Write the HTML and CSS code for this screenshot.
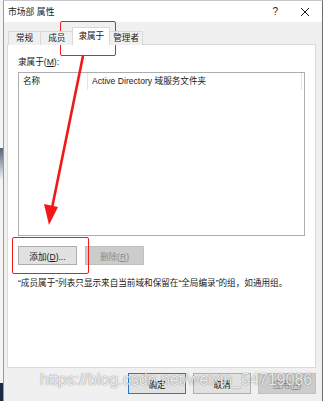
FILE: index.html
```html
<!DOCTYPE html>
<html lang="zh-CN">
<head>
  <meta charset="UTF-8" />
  <title>市场部 属性</title>
  <link rel="stylesheet" href="styles.css">
</head>
<body>
  <div class="screen">
    <div class="desk-strip"></div>

    <div class="window">
      <div class="titlebar">
        <span class="title">市场部 属性</span>
        <span class="help">?</span>
        <svg class="close" width="10" height="10" viewBox="0 0 10 10">
          <path d="M1 1 L9 9 M9 1 L1 9" stroke="#1a1a1a" stroke-width="1" fill="none"/>
        </svg>
      </div>

      <div class="dialog">
        <div class="tabs">
          <div class="tab">常规</div>
          <div class="tab">成员</div>
          <div class="tab active">隶属于</div>
          <div class="tab tab-last">管理者</div>
        </div>

        <div class="panel">
          <div class="label">隶属于(<u>M</u>):</div>

          <div class="list">
            <div class="list-head">
              <div class="col col-name">名称</div>
              <div class="col col-folder">Active Directory 域服务文件夹</div>
            </div>
          </div>

          <div class="list-actions">
            <button class="button">添加(<u>D</u>)...</button>
            <button class="button disabled">删除(<u>R</u>)</button>
          </div>

          <p class="note">“成员属于”列表只显示来自当前域和保留在“全局编录”的组，如通用组。</p>
        </div>

        <div class="footer">
          <button class="button default">确定</button>
          <button class="button">取消</button>
          <button class="button disabled">应用(<u>A</u>)</button>
        </div>
      </div>
    </div>

    <!-- annotations drawn over the screenshot -->
    <div class="mark mark-tab"></div>
    <div class="mark mark-add"></div>
    <svg class="arrow" width="323" height="401" viewBox="0 0 323 401">
      <line x1="83" y1="56" x2="52" y2="208" stroke="#f01818" stroke-width="2.6"/>
      <polygon points="44,204 58,207 49,225" fill="#f01818"/>
    </svg>

    <div class="watermark">https://blog.csdn.net/weixin_54719086</div>
  </div>
</body>
</html>
```

FILE: styles.css
```css
body {
  margin: 0;
  font-family: 'Liberation Sans', 'Noto Sans CJK SC', sans-serif;
  font-size: 8.6px;
  color: #1a1a1a;
  background: #f0f0f0;
}

.screen {
  position: relative;
  display: flex;
  width: 323px;
  height: 401px;
  overflow: hidden;
}

.desk-strip {
  width: 3px;
  background: linear-gradient(#f4f4f4 0, #f4f4f4 148px, #55627a 148px, #f4f4f4 180px, #f4f4f4 383px, #1b2a42 383px);
}

.window {
  flex: 1;
  display: flex;
  flex-direction: column;
  border-left: 1px solid #9a9a9a;
  border-right: 1px solid #6b6b6b;
  border-top: 1px solid #c8c8c8;
  background: #f0f0f0;
}

.titlebar {
  display: flex;
  align-items: center;
  height: 21px;
  padding-left: 4px;
  background: #fff;
}

.title {
  flex: 1;
  font-size: 8.8px;
}

.help {
  font-size: 10px;
  margin-right: 22px;
  color: #222;
}

.close {
  margin-right: 12px;
}

.dialog {
  padding: 7px 6px 0 3px;
}

.tabs {
  display: flex;
  align-items: flex-end;
  height: 16px;
  margin-bottom: -1px;
  padding-left: 1px;
  position: relative;
  z-index: 1;
}

.tab {
  height: 13px;
  line-height: 13px;
  padding: 0 7px;
  border: 1px solid #d9d9d9;
  border-bottom: none;
  border-right: none;
  background: #f0f0f0;
}

.tab-last {
  padding: 0 3px;
  border-right: 1px solid #d9d9d9;
}

.tab.active {
  height: 17px;
  line-height: 16px;
  padding: 0 5px;
  background: #fff;
  border-right: 1px solid #d9d9d9;
}

.tab.active + .tab {
  border-left: none;
}

.panel {
  box-sizing: border-box;
  height: 324px;
  padding: 12px 10px 0 10px;
  background: #fff;
  border: 1px solid #d9d9d9;
}

.label {
  line-height: 11px;
  margin-bottom: 4px;
}

.list {
  box-sizing: border-box;
  height: 164px;
  border: 1px solid #adadad;
  background: #fff;
}

.list-head {
  display: flex;
  height: 17px;
}

.col {
  line-height: 17px;
  padding-left: 4px;
  border-right: 1px solid #e5e5e5;
  white-space: nowrap;
}

.col-name {
  width: 64px;
}

.col-folder {
  width: 209px;
}

.list-actions {
  display: flex;
  gap: 8px;
  margin-top: 10px;
}

.button {
  box-sizing: border-box;
  width: 59px;
  height: 19px;
  padding: 0;
  font-family: inherit;
  font-size: 8.6px;
  color: #1a1a1a;
  background: #e1e1e1;
  border: 1px solid #adadad;
}

.button.disabled {
  color: #8a8a8a;
  background: #cccccc;
  border-color: #bfbfbf;
}

.button.default {
  border: 1px solid #1a7fd4;
}

.note {
  margin: 13px 0 0;
  line-height: 11px;
  white-space: nowrap;
}

.footer {
  display: flex;
  justify-content: flex-end;
  gap: 7px;
  margin-top: 5px;
}

.footer .button {
  width: 58px;
  height: 21px;
}

.mark {
  position: absolute;
  border: 1px solid #ee1c1c;
  border-radius: 2px;
}

.mark-tab {
  left: 60px;
  top: 21px;
  width: 54px;
  height: 33px;
}

.mark-add {
  left: 12px;
  top: 237px;
  width: 75px;
  height: 35px;
}

.arrow {
  position: absolute;
  left: 0;
  top: 0;
  pointer-events: none;
}

.watermark {
  position: absolute;
  left: 40px;
  top: 371px;
  font-family: 'Liberation Sans', sans-serif;
  font-size: 16px;
  color: rgba(255, 255, 255, 0.85);
  text-shadow: 0 0 1px rgba(0, 0, 0, 0.45), 0 0 2px rgba(0, 0, 0, 0.15);
  white-space: nowrap;
  pointer-events: none;
}
```
